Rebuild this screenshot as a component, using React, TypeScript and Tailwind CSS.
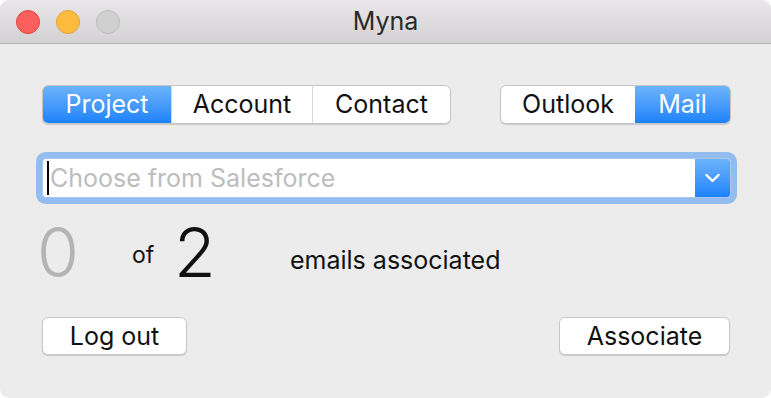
import React from "react";

const FONT = { fontFamily: "Inter, 'Helvetica Neue', 'Liberation Sans', sans-serif" };

function Segmented({ items, active, widths }: { items: string[]; active: string; widths: number[] }) {
  return (
    <div className="flex h-[39px] overflow-hidden rounded-[6px] border border-[#c6c6c6] bg-white shadow-[0_1px_1px_rgba(0,0,0,0.15)]">
      {items.map((label, i) => (
        <div
          key={label}
          style={{ width: widths[i] }}
          className={`flex items-center justify-center text-[25px] leading-none ${
            i > 0 ? "border-l border-[#d8d8d8]" : ""
          } ${
            label === active
              ? "border-l-0 bg-gradient-to-b from-[#6cb3fa] to-[#1a82fb] text-white"
              : "text-[#111]"
          }`}
        >
          {label}
        </div>
      ))}
    </div>
  );
}

function PushButton({ label, width }: { label: string; width: number }) {
  return (
    <button
      style={{ width }}
      className="flex h-[38px] items-center justify-center rounded-[6px] border border-[#c8c8c8] bg-white text-[25px] leading-none text-[#111] shadow-[0_1px_1px_rgba(0,0,0,0.15)]"
    >
      {label}
    </button>
  );
}

export default function App() {
  return (
    <div className="h-[398px] w-[771px] bg-white" style={FONT}>
      <div className="flex h-full w-full flex-col overflow-hidden rounded-[9px] bg-[#ececec]">
        {/* Title bar */}
        <div className="relative flex h-[44px] shrink-0 items-center justify-center border-b border-[#b3b3b3] bg-gradient-to-b from-[#e9e7e9] to-[#d3d1d3]">
          <div className="absolute left-[16px] top-[10px] flex gap-[16px]">
            <span className="h-[24px] w-[24px] rounded-full border border-[#e0443e] bg-[#fc605c]" />
            <span className="h-[24px] w-[24px] rounded-full border border-[#dea236] bg-[#fdbc40]" />
            <span className="h-[24px] w-[24px] rounded-full border border-[#bcbcbc] bg-[#d0d0d0]" />
          </div>
          <span className="text-[25px] leading-none text-[#2a2a2a]">Myna</span>
        </div>

        {/* Body */}
        <div className="flex flex-col pl-[42px] pr-[40px]">
          <div className="mt-[41px] flex justify-between">
            <Segmented items={["Project", "Account", "Contact"]} active="Project" widths={[128, 141, 138]} />
            <Segmented items={["Outlook", "Mail"]} active="Mail" widths={[134, 95]} />
          </div>

          {/* Combo box */}
          <div className="mt-[34px] flex h-[40px] w-[689px] rounded-[4px] border border-[#a9c7ee] bg-white shadow-[0_0_0_6px_#94bdef]">
            <div className="flex flex-1 items-center pl-[4px]">
              <span className="h-[34px] w-[2px] bg-black" />
              <span className="ml-[1px] text-[25px] leading-none text-[#bdbdbd]">Choose from Salesforce</span>
            </div>
            <div className="flex w-[35px] items-center justify-center rounded-r-[3px] bg-gradient-to-b from-[#6cb3fa] to-[#1a82fb]">
              <svg width="15" height="10" viewBox="0 0 15 10" fill="none">
                <path d="M1.5 2 L7.5 8 L13.5 2" stroke="white" strokeWidth="2.4" strokeLinecap="round" strokeLinejoin="round" />
              </svg>
            </div>
          </div>

          {/* Counts */}
          <div className="relative mt-[26px] flex h-[62px] items-end">
            <span className="ml-[-5px] w-[95px] text-[68px] font-light leading-none text-[#b4b4b4]">0</span>
            <span className="mb-[19px] w-[42px] text-[23px] leading-none text-[#111]">of</span>
            <span className="w-[116px] text-[68px] font-light leading-none text-[#111]">2</span>
            <span className="mb-[13px] text-[25px] leading-none text-[#111]">emails associated</span>
          </div>

          {/* Buttons */}
          <div className="mt-[31px] flex justify-between pr-[1px]">
            <PushButton label="Log out" width={145} />
            <PushButton label="Associate" width={171} />
          </div>
        </div>
      </div>
    </div>
  );
}
